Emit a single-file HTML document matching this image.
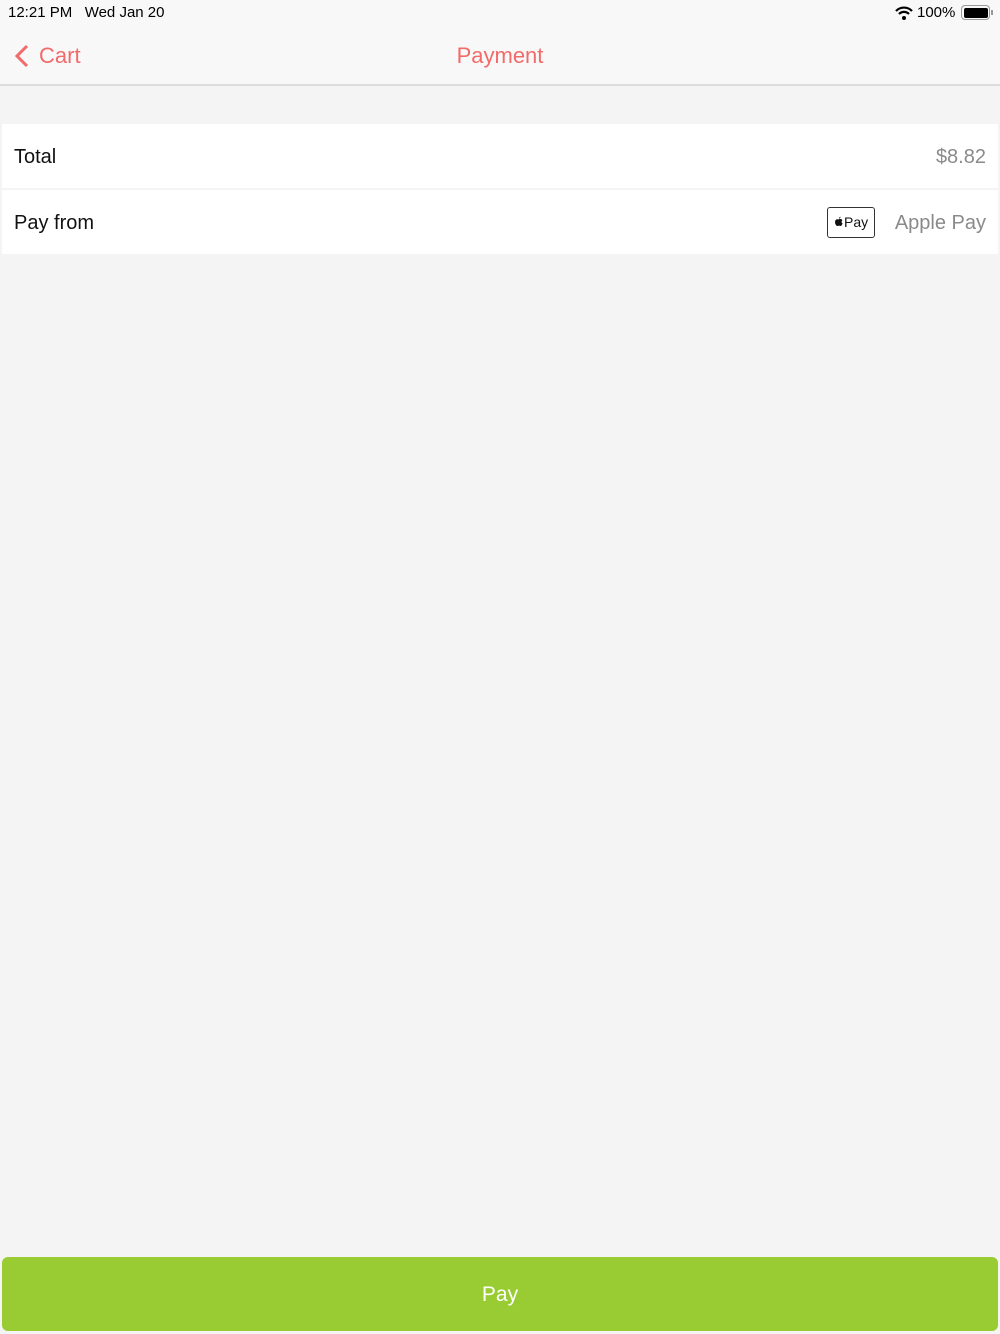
<!DOCTYPE html>
<html><head><meta charset="utf-8"><style>
*{margin:0;padding:0;box-sizing:border-box}
body{width:1000px;height:1334px;background:#f4f4f4;font-family:"Liberation Sans",sans-serif;position:relative;overflow:hidden}
.top{position:absolute;left:0;top:0;width:1000px;height:86px;background:#f8f8f8;border-bottom:2px solid #dcdcdc}
.st{position:absolute;top:4px;font-size:15px;color:#000}
.nav{position:absolute;top:43px;font-size:22px;color:#f26b6b}
.row{position:absolute;left:2px;width:996px;height:64px;background:#fff}
.lbl{position:absolute;left:12px;font-size:20px;color:#111;top:22px}
.val{position:absolute;right:12px;font-size:20px;color:#8a8a8a;top:22px}
.ap{position:absolute;left:825px;top:17px;width:48px;height:31px;border:1px solid #333;border-radius:3px;font-size:14px;line-height:29px;color:#111;padding-left:6px}
.btn{position:absolute;left:2px;top:1257px;width:996px;height:74px;background:#99cc33;border-radius:6px;color:#fff;font-size:21px;text-align:center;line-height:76px}
</style></head><body>
<div class="top">
<div class="st" style="left:8px">12:21 PM&nbsp;&nbsp;&nbsp;Wed Jan 20</div>
<svg style="position:absolute;left:895px;top:6px" width="18" height="14" viewBox="0 0 18 14"><path d="M1 5a11 11 0 0 1 16 0" stroke="#000" stroke-width="2.2" fill="none"/><path d="M4 8a7 7 0 0 1 10 0" stroke="#000" stroke-width="2.2" fill="none"/><circle cx="9" cy="12" r="2" fill="#000"/></svg>
<div class="st" style="left:917px">100%</div>
<div style="position:absolute;left:961px;top:5px;width:29px;height:15px;border:1px solid #999;border-radius:4px;padding:1.5px"><div style="width:100%;height:100%;background:#000;border-radius:2px"></div></div>
<div style="position:absolute;left:991px;top:10px;width:2px;height:5px;background:#999"></div>
<svg style="position:absolute;left:14px;top:44px" width="16" height="24" viewBox="0 0 16 24"><path d="M13 2L3 12l10 10" stroke="#f26b6b" stroke-width="3" fill="none"/></svg>
<div class="nav" style="left:39px">Cart</div>
<div class="nav" style="left:0;width:1000px;text-align:center">Payment</div>
</div>
<div class="row" style="top:124px"><div class="lbl">Total</div><div class="val">$8.82</div></div>
<div class="row" style="top:190px"><div class="lbl">Pay from</div><div class="ap"><svg width="10" height="12" viewBox="0 0 10 12" style="vertical-align:-1px"><path d="M5 3.2C5.6 2.8 6.8 2.8 7.6 3.4 8.4 4 8.3 4.5 8.3 4.5 7.3 5.1 7.4 6.8 8.6 7.4 8.2 8.6 7.4 10 6.6 10 5.9 10 5.8 9.6 5 9.6S4 10 3.4 10C2.5 10 1 8.2 1 6.1 1 4.2 2.3 3.2 3.3 3.2 4.2 3.2 4.5 3.6 5 3.2Z M5 2.6C5 1.7 5.7 .9 6.5.8 6.6 1.8 5.8 2.7 5 2.6Z" fill="#111"/></svg>Pay</div><div class="val">Apple Pay</div></div>
<div class="btn">Pay</div>
</body></html>
